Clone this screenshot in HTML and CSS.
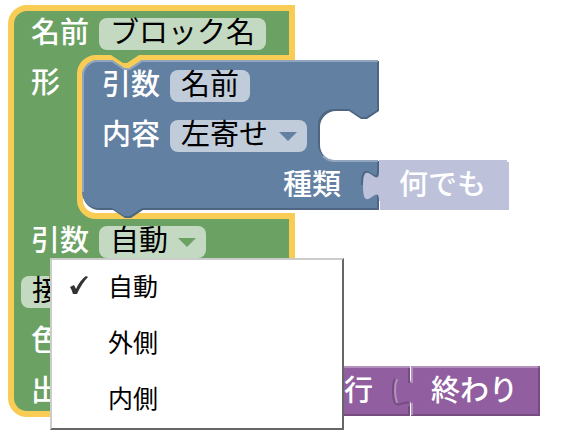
FILE: index.html
```html
<!DOCTYPE html>
<html lang="ja">
<head>
<meta charset="utf-8">
<meta name="viewport" content="width=device-width, initial-scale=1">
<title>ブロック</title>
<link rel="stylesheet" href="styles.css">
</head>
<body>
<main class="workspace">
  <section class="block definition">
    <svg class="shape" width="284" height="410" aria-hidden="true">
      <path class="fill-green selected" d="M16,-1 H281 V49 H129 l-12,8 h-6 l-12,-8 H85 a16,16 0 0 0 -16,16 V191 a16,16 0 0 0 16,16 H281 V405 H16 a16,16 0 0 1 -16,-16 V15 a16,16 0 0 1 16,-16 z"/>
    </svg>
    <div class="row"><label for="block-name">名前</label><div class="field"><input class="control wide" id="block-name" value="ブロック名"></div></div>
    <div class="row statement"><span>形</span></div>
    <div class="row"><span id="inputs-label">引数</span><div class="field"><button class="control picker" type="button" aria-haspopup="listbox" aria-expanded="true" aria-labelledby="inputs-label">自動</button><svg class="arrow" width="20" height="10" viewBox="0 0 20 10" aria-hidden="true"><path d="M1 0H19L10 9z"/></svg></div></div>
    <div class="row flush"><div class="field"><button class="control" type="button">接続</button></div></div>
    <div class="row"><span>色</span></div>
    <div class="row"><span>出力</span></div>
  </section>

  <section class="block input-block">
    <svg class="shape" width="298" height="160" aria-hidden="true">
      <path class="fill-blue-dark" d="M17,0 H31 l12,8 h6 l12,-8 H297 V50 l-12,8 h-6 l-12,-8 H254 a16,16 0 0 0 -16,16 V84 a16,16 0 0 0 16,16 H297 V149 H61 l-12,8 h-6 l-12,-8 H17 a16,16 0 0 1 -16,-16 V16 a16,16 0 0 1 16,-16 z"/>
      <path class="fill-blue" d="M16,-1 H30 l12,8 h6 l12,-8 H295 V49 l-11,7 h-5 l-12,-8 H252 a16,16 0 0 0 -16,16 V83 a16,16 0 0 0 16,16 H295 V147 H60 l-12,8 h-6 l-12,-8 H16 a16,16 0 0 1 -16,-16 V15 a16,16 0 0 1 16,-16 z"/>
      <path class="light light-blue" d="M1,131 V16 a15,15 0 0 1 15,-16 H30 l12,8 h6 l12,-8 H296 M241,95 a16,16 0 0 0 12,5 H296"/>
      <path class="dark dark-blue" d="M296,109 c0,20 -16,-16 -16,15"/>
    </svg>
    <div class="row"><label for="input-name">引数</label><div class="field"><input class="control narrow" id="input-name" value="名前"></div></div>
    <div class="row"><label for="align">内容</label><div class="field"><select class="control picker" id="align"><option>左寄せ</option></select><svg class="arrow blue-arrow" width="20" height="10" viewBox="0 0 20 10" aria-hidden="true"><path d="M1 0H19L10 9z"/></svg></div></div>
    <div class="row end"><span>種類</span></div>
  </section>

  <section class="block any-block">
    <svg class="shape" width="131" height="50" aria-hidden="true">
      <path class="fill-lilac" d="M0,-1 H128 V1 H130 V49 H1 V40 H0 c0,-20 -16,16 -16,-15 s16,5 16,-15 z"/>
    </svg>
    <div class="row"><span>何でも</span></div>
  </section>

  <section class="block run-block">
    <svg class="shape" width="116" height="50" aria-hidden="true">
      <path class="fill-purple" d="M0,0 H115 V49 H0 z"/>
      <path class="light light-purple" d="M0,0 H115"/>
      <path class="dark dark-purple" d="M0,48 H115 M114,1 V16"/>
      <path class="dark dark-purple" d="M114,39 V48"/>
    </svg>
    <div class="row"><span>実行</span></div>
  </section>

  <section class="block end-block">
    <svg class="shape" width="131" height="50" aria-hidden="true">
      <path class="fill-purple" d="M0,-1 H129 V49 H0 V40 c0,-20 -16,16 -16,-15 s16,5 16,-15 z"/>
      <path class="dark dark-purple" d="M-2,36 c-5,-4 -16,12 -16,-12 c0,-9 1,-11 2,-12 M0,48 H128 V1"/>
      <path class="light light-purple" d="M1,16 V0 H127 M-14,12 q-4,11 0,24 M1,36 V48"/>
    </svg>
    <div class="row"><span>終わり</span></div>
  </section>

  <ul class="menu" role="listbox" aria-labelledby="inputs-label">
    <li class="option" role="option" aria-selected="true">
      <svg class="check" width="22" height="22" viewBox="0 0 22 22" aria-hidden="true"><path d="M2 13L6 11L8 15Q12 6 18 2L20 3Q14 9 9 20L5 20Q4 16 2 13z"/></svg>
      <span>自動</span>
    </li>
    <li class="option" role="option" aria-selected="false"><span>外側</span></li>
    <li class="option" role="option" aria-selected="false"><span>内側</span></li>
  </ul>
</main>
</body>
</html>
```
FILE: styles.css
```css
* {
  box-sizing: border-box;
}

body {
  margin: 0;
  background: #fff;
  font-family: "Noto Sans CJK JP", "Noto Sans", sans-serif;
}

.workspace {
  position: relative;
  min-height: 100vh;
  overflow: hidden;
}

/* Blocks sit at free positions on the workspace canvas. */
.block {
  position: absolute;
  color: #fff;
  font-size: 29px;
  font-weight: 500;
  line-height: 32px;
}

.definition { left: 11px; top: 9px; }
.input-block { left: 82px; top: 61px; width: 297px; }
.any-block { left: 379px; top: 161px; }
.run-block { left: 295px; top: 367px; }
.end-block { left: 411px; top: 367px; }

.shape {
  position: absolute;
  left: 0;
  top: 0;
  overflow: visible;
}

.row {
  position: relative;
  display: flex;
  align-items: center;
  gap: 10px;
  height: 50px;
  padding: 0 20px;
  white-space: nowrap;
}

.row > span,
.row > label {
  padding-bottom: 8px;
}

.statement {
  height: 158px;
  align-items: flex-start;
  padding-top: 5px;
}

.flush { padding-left: 10px; }

.end {
  justify-content: flex-end;
  padding-right: 38px;
}

/* The tinted pill is shorter than the control's line box. */
.field {
  position: relative;
  display: flex;
  align-items: center;
  height: 32px;
  border-radius: 8px;
  background: rgba(255, 255, 255, 0.6);
}

.control {
  height: 44px;
  margin: 0 0 8px;
  padding: 0 11px;
  border: 0;
  background: transparent;
  color: #000;
  font: 400 29px/44px "Noto Sans CJK JP", "Noto Sans", sans-serif;
  appearance: none;
}

.wide { width: 167px; }
.narrow { width: 80px; }
.picker { padding-right: 38px; }

.arrow {
  position: absolute;
  right: 9px;
  top: 12px;
  fill: #6ca164;
  pointer-events: none;
}

.blue-arrow { fill: #6280a2; }

.fill-green { fill: #6ca164; }
.selected { stroke: #f9cc55; stroke-width: 6px; }
.fill-blue { fill: #6280a2; }
.fill-blue-dark { fill: #4e6682; }
.fill-lilac { fill: #bdc1d9; }
.fill-purple { fill: #915fa0; }

.light,
.dark {
  fill: none;
  stroke-width: 2px;
}

.light-blue { stroke: #91a6be; }
.dark-blue { stroke: #4e6682; }
.light-purple { stroke: #b28fbc; }
.dark-purple { stroke: #744c80; }

.menu {
  position: absolute;
  left: 50px;
  top: 258px;
  width: 294px;
  margin: 0;
  padding: 0;
  border: 2px solid;
  border-color: #ccc #666 #666 #ccc;
  background: #fff;
  list-style: none;
}

.option {
  display: grid;
  grid-template-columns: 40px 1fr;
  align-items: center;
  height: 56px;
  padding: 0 0 6px 16px;
  color: #000;
  font-size: 25px;
  line-height: 32px;
}

.option span {
  grid-column: 2;
}

.check { fill: #333; }
```
